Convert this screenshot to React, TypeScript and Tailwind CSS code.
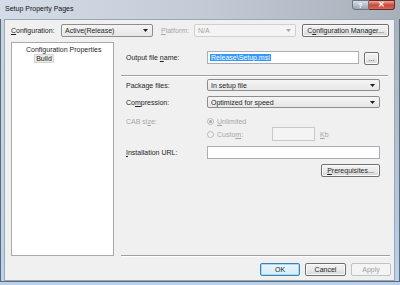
import React from "react";

type BoxProps = { className?: string; children?: React.ReactNode };

const Arrow = ({ disabled }: { disabled?: boolean }) => (
  <svg width="5" height="3" viewBox="0 0 5 3" className="shrink-0">
    <path d="M0 0h5L2.5 3z" fill={disabled ? "#a6a6a6" : "#1e1e1e"} />
  </svg>
);

const Combo = ({
  text,
  className,
  disabled,
}: {
  text: string;
  className?: string;
  disabled?: boolean;
}) => (
  <div
    className={`flex items-center justify-between rounded-[2px] border pl-[3px] pr-[4px] ${
      disabled
        ? "border-[#d0d0d0] bg-[#f4f4f4] text-[#a6a6a6]"
        : "border-[#8d8d8d] bg-gradient-to-b from-[#f5f5f5] to-[#e6e6e6] text-[#1e1e1e]"
    } ${className ?? ""}`}
  >
    <span>{text}</span>
    <Arrow disabled={disabled} />
  </div>
);

const Btn = ({
  children,
  className,
  variant = "normal",
}: BoxProps & { variant?: "normal" | "default" | "disabled" }) => {
  const look =
    variant === "default"
      ? "border-[#3c7fb1] bg-gradient-to-b from-[#eaf6fd] to-[#d4ecf9] text-[#1e1e1e] shadow-[inset_0_0_0_1px_#a7d9f5]"
      : variant === "disabled"
      ? "border-[#c0c3c5] bg-[#f4f4f4] text-[#a0a0a0]"
      : "border-[#707070] bg-gradient-to-b from-[#f2f2f2] via-[#ebebeb] to-[#d6d6d6] text-[#1e1e1e] shadow-[inset_0_0_0_1px_#fcfcfc]";
  return (
    <div
      className={`flex items-center justify-center rounded-[2px] border ${look} ${className ?? ""}`}
    >
      {children}
    </div>
  );
};

const TextBox = ({ className, children }: BoxProps) => (
  <div
    className={`flex items-center border border-[#abadb3] bg-white ${className ?? ""}`}
  >
    {children}
  </div>
);

const Radio = ({ checked }: { checked?: boolean }) => (
  <span className="flex h-[7px] w-[7px] shrink-0 items-center justify-center rounded-full border border-[#b8b8b8] bg-[#f2f2f2]">
    {checked && <span className="h-[3px] w-[3px] rounded-full bg-[#a8a8a8]" />}
  </span>
);

const Separator = ({ className }: { className?: string }) => (
  <div
    className={`h-[2px] border-t border-b border-t-[#a0a0a0] border-b-white ${className ?? ""}`}
  />
);

const TitleBar = () => (
  <div className="flex h-[19px] shrink-0 items-start bg-gradient-to-r from-[#d4dde7] via-[#c3ccd6] to-[#a7b0b9]">
    <span className="ml-[5px] mt-[5px] text-[#111]">Setup Property Pages</span>
    <div className="ml-auto mr-[5px] flex">
      <div className="flex h-[10px] w-[17px] items-center justify-center rounded-bl-[3px] border border-[#6c7680] bg-gradient-to-b from-[#d7dee5] via-[#b9c2cb] to-[#9aa4ae] text-[7px] font-bold text-white">
        ?
      </div>
      <div className="flex h-[10px] w-[26px] items-center justify-center rounded-br-[3px] border border-l-0 border-[#6b2a22] bg-gradient-to-b from-[#e9a99c] via-[#c8483a] to-[#d5675a] text-[8px] font-bold text-white">
        ✕
      </div>
    </div>
  </div>
);

const TreePanel = () => (
  <div className="flex h-[214px] w-[103px] shrink-0 flex-col border border-[#a9a9a9] bg-white">
    <span className="ml-[14px] mt-[3px] text-[#1e1e1e]">Configuration Properties</span>
    <span className="ml-[22px] mt-[1px] flex h-[9px] w-[20px] items-center justify-center border border-[#d6d6d0] bg-[#ebebe6] text-[#1e1e1e]">
      Build
    </span>
  </div>
);

const RightPanel = () => (
  <div className="ml-[7px] flex h-[215px] w-[269px] flex-col">
    <div className="mt-[9px] flex h-[13px] items-center">
      <span className="w-[86px] pl-[5px]">
        Output file <u>n</u>ame:
      </span>
      <TextBox className="h-[13px] w-[152px] pl-[2px]">
        <span className="bg-[#3399ff] px-[1px] text-white">Release\Setup.msi</span>
      </TextBox>
      <Btn className="ml-[5px] mt-[2px] h-[13px] w-[15px]">...</Btn>
    </div>
    <Separator className="mt-[11px] w-[267px]" />
    <div className="mt-[2px] flex h-[12px] items-center">
      <span className="w-[86px] pl-[5px]">Package files:</span>
      <Combo text="In setup file" className="h-[12px] w-[173px]" />
    </div>
    <div className="mt-[5px] flex h-[12px] items-center">
      <span className="w-[86px] pl-[5px]">
        Co<u>m</u>pression:
      </span>
      <Combo text="Optimized for speed" className="h-[12px] w-[173px]" />
    </div>
    <div className="mt-[8px] flex h-[10px] items-center text-[#a6a6a6]">
      <span className="w-[86px] pl-[5px]">
        CAB si<u>z</u>e:
      </span>
      <Radio checked />
      <span className="ml-[3px]">
        <u>U</u>nlimited
      </span>
    </div>
    <div className="mt-[1px] flex h-[14px] items-center text-[#a6a6a6]">
      <span className="w-[86px]" />
      <div className="flex w-[65px] items-center">
        <Radio />
        <span className="ml-[3px]">
          Custo<u>m</u>:
        </span>
      </div>
      <div className="h-[14px] w-[43px] border border-[#c9c9c9] bg-[#f4f4f4]" />
      <span className="ml-[5px]">
        <u>K</u>b
      </span>
    </div>
    <div className="mt-[5px] flex h-[13px] items-center">
      <span className="w-[86px] pl-[5px]">
        <u>I</u>nstallation URL:
      </span>
      <TextBox className="h-[13px] w-[173px]" />
    </div>
    <div className="mt-[5px] flex w-[259px] justify-end">
      <Btn className="h-[13px] w-[59px]">
        <span>
          <u>P</u>rerequisites...
        </span>
      </Btn>
    </div>
    <div className="flex-1" />
    <Separator className="w-[269px]" />
  </div>
);

const Client = () => (
  <div className="flex h-[262px] w-[391px] flex-col border border-[#98a8b9] bg-[#f0f0f0] text-[#1e1e1e]">
    <div className="ml-[6px] mt-[4px] flex h-[13px] items-center">
      <span className="w-[50px]">
        <u>C</u>onfiguration:
      </span>
      <Combo text="Active(Release)" className="h-[13px] w-[92px]" />
      <span className="ml-[8px] w-[33px] text-[#a6a6a6]">
        <u>P</u>latform:
      </span>
      <Combo text="N/A" disabled className="h-[13px] w-[102px]" />
      <Btn className="ml-[6px] h-[13px] w-[87px]">
        <span>
          C<u>o</u>nfiguration Manager...
        </span>
      </Btn>
    </div>
    <div className="ml-[6px] mt-[5px] flex">
      <TreePanel />
      <RightPanel />
    </div>
    <div className="mt-[6px] flex justify-end gap-[5px] pr-[3px]">
      <Btn variant="default" className="h-[13px] w-[40px]">
        OK
      </Btn>
      <Btn className="h-[13px] w-[41px]">Cancel</Btn>
      <Btn variant="disabled" className="h-[13px] w-[40px]">
        Apply
      </Btn>
    </div>
  </div>
);

export default function App() {
  return (
    <div className="flex h-[285px] w-[400px] flex-col overflow-hidden bg-[#b9d1ea] font-['Liberation_Sans',Arial,sans-serif] text-[7px] leading-none">
      <TitleBar />
      <div className="flex border-l border-r border-b border-[#5d6b79]">
        <div className="w-[3px] shrink-0 bg-gradient-to-b from-[#c6d3e0] to-[#b9d1ea]" />
        <Client />
        <div className="w-[4px] shrink-0 bg-gradient-to-b from-[#a8b2bc] to-[#b9d1ea]" />
      </div>
    </div>
  );
}
